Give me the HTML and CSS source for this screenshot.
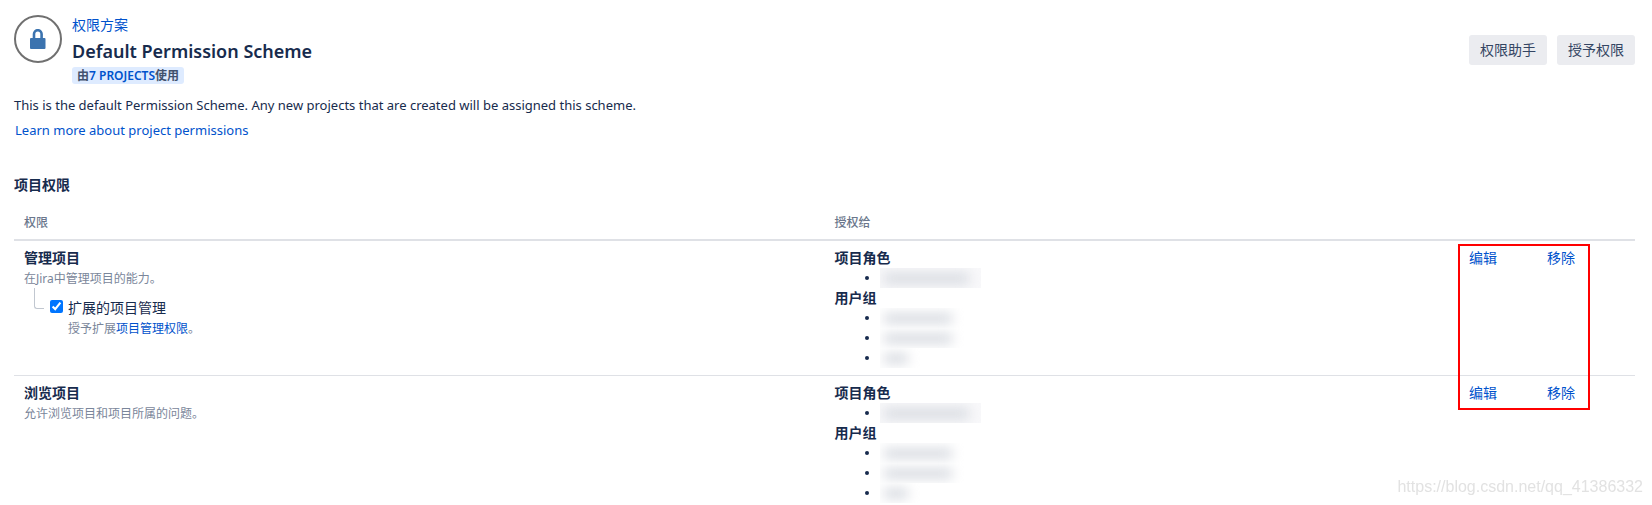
FILE: index.html
```html
<!DOCTYPE html>
<html lang="zh-CN">
<head>
    <meta charset="UTF-8">
    <meta name="viewport" content="width=device-width, initial-scale=1.0">
    <title>Default Permission Scheme</title>
    <link rel="stylesheet" href="styles.css">
</head>
<body>
    <header class="page-header">
        <div class="avatar">
            <svg width="16" height="20" viewBox="0 0 16 20" aria-hidden="true">
                <path d="M4 10V5a3.800 3.800 0 0 1 7.600 0V10" fill="none" stroke="#3b73af" stroke-width="2.600"/>
                <rect x="0" y="9" width="15.500" height="11" rx="1" fill="#3b73af"/>
            </svg>
        </div>
        <div class="header-main">
            <a class="breadcrumb" href="#">权限方案</a>
            <h1>Default Permission Scheme</h1>
            <span class="lozenge">由<a href="#">7 PROJECTS</a>使用</span>
        </div>
        <div class="header-actions">
            <button type="button">权限助手</button>
            <button type="button">授予权限</button>
        </div>
    </header>

    <main>
        <p class="description">This is the default Permission Scheme. Any new projects that are created will be assigned this scheme.</p>
        <a class="learn-more" href="#">Learn more about project permissions</a>

        <h2>项目权限</h2>
        <div class="table-wrap">
            <table class="permissions">
                <thead>
                    <tr>
                        <th class="col-permission">权限</th>
                        <th>授权给</th>
                        <th class="col-actions"></th>
                    </tr>
                </thead>
                <tbody>
                    <tr>
                        <td>
                            <p class="name">管理项目</p>
                            <p class="hint">在Jira中管理项目的能力。</p>
                            <div class="extended">
                                <input type="checkbox" id="extendedAdmin" checked>
                                <div>
                                    <label for="extendedAdmin">扩展的项目管理</label>
                                    <p class="hint">授予扩展<a href="#">项目管理权限</a>。</p>
                                </div>
                            </div>
                        </td>
                        <td>
                            <p class="name">项目角色</p>
                            <ul>
                                <li><span class="redacted long"></span></li>
                            </ul>
                            <p class="name">用户组</p>
                            <ul>
                                <li><span class="redacted medium"></span></li>
                                <li><span class="redacted medium"></span></li>
                                <li><span class="redacted short"></span></li>
                            </ul>
                        </td>
                        <td>
                            <div class="row-actions">
                                <a href="#">编辑</a>
                                <a href="#">移除</a>
                            </div>
                        </td>
                    </tr>
                    <tr>
                        <td>
                            <p class="name">浏览项目</p>
                            <p class="hint">允许浏览项目和项目所属的问题。</p>
                        </td>
                        <td>
                            <p class="name">项目角色</p>
                            <ul>
                                <li><span class="redacted long"></span></li>
                            </ul>
                            <p class="name">用户组</p>
                            <ul>
                                <li><span class="redacted medium"></span></li>
                                <li><span class="redacted medium"></span></li>
                                <li><span class="redacted short"></span></li>
                            </ul>
                        </td>
                        <td>
                            <div class="row-actions">
                                <a href="#">编辑</a>
                                <a href="#">移除</a>
                            </div>
                        </td>
                    </tr>
                </tbody>
            </table>
            <div class="highlight"></div>
        </div>
    </main>
    <div class="watermark">https://blog.csdn.net/qq_41386332</div>
</body>
</html>
```
FILE: styles.css
```css
* {
    box-sizing: border-box;
    margin: 0;
    padding: 0;
}

body {
    font-family: 'Noto Sans', 'Noto Sans CJK SC', sans-serif;
    font-size: 14px;
    line-height: 20px;
    color: #172b4d;
    background: #fff;
    padding: 15px 17px 0 14px;
}

a {
    color: #0052cc;
    text-decoration: none;
}

a:hover {
    text-decoration: underline;
}

.page-header {
    display: flex;
    gap: 10px;
}

.avatar {
    display: flex;
    align-items: center;
    justify-content: center;
    width: 48px;
    height: 48px;
    border: 2px solid #707070;
    border-radius: 50%;
}

.header-main {
    flex: 1;
    display: flex;
    flex-direction: column;
    align-items: flex-start;
}

h1 {
    font-size: 18px;
    font-weight: 600;
    line-height: 32px;
}

.lozenge {
    padding: 0 5px;
    font-size: 12px;
    font-weight: 600;
    line-height: 17px;
    color: #42526e;
    background: #deebff;
    border-radius: 3px;
}

.header-actions {
    display: flex;
    gap: 10px;
    padding-top: 20px;
}

button {
    height: 30px;
    padding: 0 11px;
    font: inherit;
    color: #344563;
    background: #ebecf0;
    border: none;
    border-radius: 3px;
    cursor: pointer;
}

.description {
    margin-top: 11px;
    font-size: 13px;
}

.learn-more {
    display: block;
    margin-top: 5px;
    padding-left: 1px;
    font-size: 13px;
}

h2 {
    margin-top: 35px;
    font-size: 14px;
    font-weight: 600;
}

.table-wrap {
    position: relative;
    margin-top: 10px;
}

.permissions {
    width: 100%;
    table-layout: fixed;
    border-spacing: 0;
}

.col-permission {
    width: 50%;
}

.col-actions {
    width: 176px;
}

th {
    height: 36px;
    padding: 8px 10px 6px;
    font-size: 12px;
    font-weight: 500;
    text-align: left;
    color: #6b778c;
    border-bottom: 2px solid #dfe1e6;
}

td {
    padding: 7px 10px;
    vertical-align: top;
    border-bottom: 1px solid #dfe1e6;
}

tbody tr:last-child td {
    padding-bottom: 0;
    border-bottom: none;
}

.name {
    font-weight: 600;
}

.hint {
    font-size: 12px;
    line-height: 22px;
    color: #7a869a;
}

.extended {
    position: relative;
    display: flex;
    gap: 5px;
    padding: 8px 0 0 26px;
}

/* branch line from the permission to its option */
.extended::before {
    content: "";
    position: absolute;
    left: 10px;
    top: -2px;
    width: 9px;
    height: 20px;
    border-left: 1px solid #c1c7d0;
    border-bottom: 1px solid #c1c7d0;
    border-bottom-left-radius: 3px;
}

.extended input {
    width: 13px;
    height: 13px;
    margin-top: 2px;
}

.extended label {
    display: block;
}

td ul {
    padding-left: 45px;
}

td li {
    height: 20px;
}

td li::marker {
    font-size: 12px;
}

.redacted {
    position: relative;
    display: block;
    height: 20px;
    overflow: hidden;
}

.redacted::before {
    content: "";
    position: absolute;
    inset: 5px 12px 4px 4px;
    background: #d9dce2;
    filter: blur(6px);
}

.long {
    width: 101px;
    background: #f8f8fa;
}

.medium {
    width: 84px;
}

.short {
    width: 40px;
}

.row-actions {
    display: flex;
    gap: 50px;
}

/* red frame round the row actions */
.highlight {
    position: absolute;
    top: 39px;
    right: 45px;
    width: 132px;
    height: 166px;
    border: 2px solid #f00;
    pointer-events: none;
}

.watermark {
    position: fixed;
    right: 9px;
    bottom: 8px;
    font-family: 'Liberation Sans', Arial, sans-serif;
    font-size: 16px;
    color: #e2e2e2;
}
```
